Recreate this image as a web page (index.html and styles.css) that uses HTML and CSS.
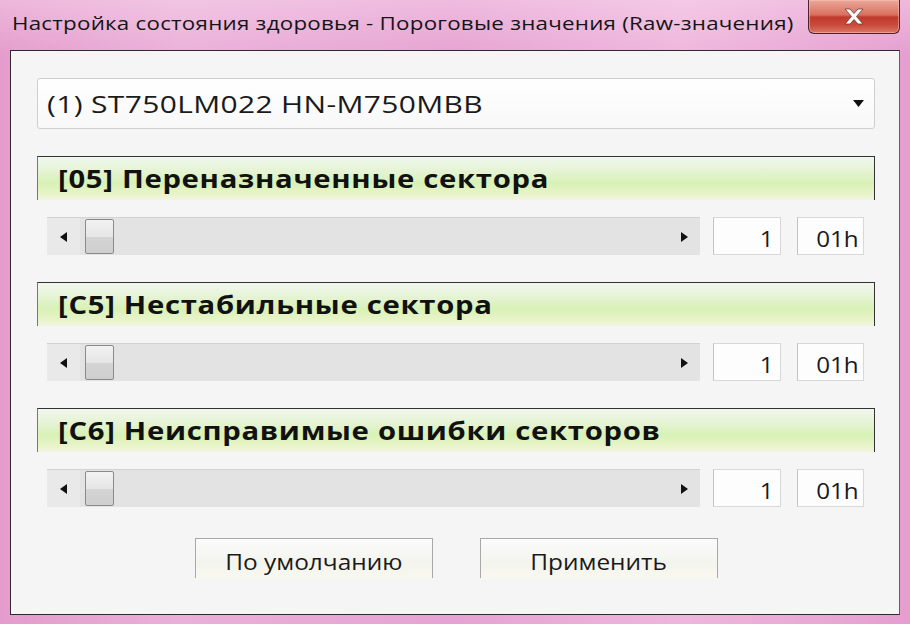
FILE: index.html
```html
<!DOCTYPE html>
<html lang="ru">
<head>
<meta charset="utf-8">
<title>Настройка состояния здоровья</title>
<link rel="stylesheet" href="styles.css">
</head>
<body>
<div class="window">
  <div class="titlebar">
    <div class="title"><span class="wide">Настройка состояния здоровья - Пороговые значения (Raw-значения)</span></div>
    <div class="close">
      <svg width="22" height="17" viewBox="0 0 22 17"><path d="M2 1h5l4 4.5 4-4.5h5l-6.5 7.5 6.5 7.5h-5l-4-4.5-4 4.5h-5l6.5-7.5z" fill="#fff" stroke="#6a3a36" stroke-width="0.8"/></svg>
    </div>
  </div>
  <div class="client">
    <div class="combo">
      <span class="combo-text">(1) ST750LM022 HN-M750MBB</span>
      <svg class="combo-arrow" width="11" height="7" viewBox="0 0 11 7"><path d="M0 0h11l-5.5 7z" fill="#111"/></svg>
    </div>

    <div class="section">
      <div class="header"><span class="htext">[05] Переназначенные сектора</span></div>
      <div class="row">
        <div class="scroll">
          <div class="sbtn"><svg width="8" height="10" viewBox="0 0 8 10"><path d="M7 0v10L0 5z" fill="#111"/></svg></div>
          <div class="thumb"></div>
          <div class="track"></div>
          <div class="sbtn"><svg width="8" height="10" viewBox="0 0 8 10"><path d="M1 0v10l7-5z" fill="#111"/></svg></div>
        </div>
        <div class="val"><span class="num">1</span></div>
        <div class="hex"><span class="num">01h</span></div>
      </div>
    </div>

    <div class="section">
      <div class="header"><span class="htext">[C5] Нестабильные сектора</span></div>
      <div class="row">
        <div class="scroll">
          <div class="sbtn"><svg width="8" height="10" viewBox="0 0 8 10"><path d="M7 0v10L0 5z" fill="#111"/></svg></div>
          <div class="thumb"></div>
          <div class="track"></div>
          <div class="sbtn"><svg width="8" height="10" viewBox="0 0 8 10"><path d="M1 0v10l7-5z" fill="#111"/></svg></div>
        </div>
        <div class="val"><span class="num">1</span></div>
        <div class="hex"><span class="num">01h</span></div>
      </div>
    </div>

    <div class="section">
      <div class="header"><span class="htext">[C6] Неисправимые ошибки секторов</span></div>
      <div class="row">
        <div class="scroll">
          <div class="sbtn"><svg width="8" height="10" viewBox="0 0 8 10"><path d="M7 0v10L0 5z" fill="#111"/></svg></div>
          <div class="thumb"></div>
          <div class="track"></div>
          <div class="sbtn"><svg width="8" height="10" viewBox="0 0 8 10"><path d="M1 0v10l7-5z" fill="#111"/></svg></div>
        </div>
        <div class="val"><span class="num">1</span></div>
        <div class="hex"><span class="num">01h</span></div>
      </div>
    </div>

    <div class="buttons">
      <div class="btn"><span class="btext">По умолчанию</span></div>
      <div class="btn"><span class="btext">Применить</span></div>
    </div>
  </div>
</div>
</body>
</html>
```

FILE: styles.css
```css
* { box-sizing: border-box; }
html, body { margin: 0; padding: 0; }
body {
  width: 910px;
  height: 624px;
  overflow: hidden;
  font-family: "Open Sans", "Noto Sans", sans-serif;
  background: linear-gradient(90deg, #e49ccc 0%, #eab0d8 20%, #e6a2d2 50%, #eeb6dc 75%, #e59ecf 100%);
}
.window {
  width: 910px;
  height: 624px;
  display: flex;
  flex-direction: column;
  background: linear-gradient(180deg, rgba(255,235,248,0.35) 0%, rgba(255,255,255,0) 9%);
}
.titlebar {
  height: 50px;
  display: flex;
  justify-content: space-between;
  align-items: flex-start;
  padding: 0 10px 0 12px;
}
.title {
  margin-top: 10px;
  font-size: 19px;
  color: #151515;
  letter-spacing: 0.2px;
  white-space: nowrap;
}
.wide {
  display: inline-block;
  transform: scaleX(1.176);
  transform-origin: left center;
}
.close {
  width: 92px;
  height: 34px;
  border: 1px solid #4b2226;
  border-top: none;
  border-radius: 0 0 6px 6px;
  background: linear-gradient(180deg, #eaa89a 0%, #d9705f 45%, #c0392c 52%, #c94a3b 75%, #db7866 100%);
  display: flex;
  align-items: center;
  justify-content: center;
  box-shadow: inset 0 0 0 1px rgba(255,200,190,0.5);
}
.client {
  margin: 0 10px 9px 10px;
  flex: 1;
  background: #f5f5f5;
  border: 1px solid #2c2a2e;
  border-right-color: #6a5a66;
  padding: 27px 24px 0 26px;
  display: flex;
  flex-direction: column;
}
.combo {
  height: 51px;
  border: 1px solid #cfcfcf;
  border-radius: 3px;
  background: linear-gradient(180deg, #ffffff 0%, #f8f8f8 100%);
  display: flex;
  align-items: center;
  justify-content: space-between;
  padding: 0 10px 0 9px;
  margin-bottom: 27px;
}
.combo-text {
  display: inline-block;
  font-size: 24px;
  color: #1a1a1a;
  letter-spacing: 0.3px;
  white-space: nowrap;
  transform: scaleX(1.247);
  transform-origin: left center;
}
.section {
  display: flex;
  flex-direction: column;
  margin-bottom: 27px;
}
.header {
  height: 44px;
  border: 1px solid #333;
  border-bottom: none;
  border-left-color: #777;
  background: linear-gradient(180deg, #f2f7ee 0%, #e4f3d2 35%, #d8f1b6 60%, #e8f4c8 85%, #f2f5e0 100%);
  font-weight: bold;
  font-size: 25px;
  color: #111;
  padding: 4px 0 0 20px;
  letter-spacing: 0.6px;
  white-space: nowrap;
}
.htext {
  display: inline-block;
  transform: scaleX(1.17);
  transform-origin: left center;
}
.row {
  margin-top: 17px;
  height: 38px;
  display: flex;
  padding-left: 10px;
}
.scroll {
  width: 653px;
  height: 38px;
  background: #e3e3e3;
  border-top: 1px solid #d2d2d2;
  display: flex;
  align-items: center;
}
.sbtn {
  width: 33px;
  height: 100%;
  display: flex;
  align-items: center;
  justify-content: center;
  background: #e9e9e9;
}
.scroll .sbtn:last-child { background: #e3e3e3; }
.thumb {
  width: 29px;
  height: 35px;
  margin-left: 5px;
  border: 1px solid #8a8a8a;
  border-radius: 2px;
  background: linear-gradient(180deg, #f2f2f2 0%, #e6e6e6 50%, #d4d4d4 51%, #cfcfcf 100%);
}
.track { flex: 1; }
.val, .hex {
  height: 38px;
  background: #fdfdfd;
  border: 1px solid #d8d8d8;
  border-left-color: #c4c4c4;
  font-size: 22px;
  color: #1a1a1a;
  text-align: right;
  line-height: 40px;
}
.num {
  display: inline-block;
  transform: scaleX(1.1);
  transform-origin: right center;
}
.val {
  width: 68px;
  margin-left: 13px;
  padding-right: 6px;
}
.hex {
  width: 67px;
  margin-left: 16px;
  padding-right: 4px;
}
.buttons {
  margin-top: 4px;
  display: flex;
  justify-content: center;
  gap: 47px;
}
.btn {
  width: 238px;
  height: 40px;
  border: 1px solid #a8a8a8;
  border-bottom: none;
  background: linear-gradient(180deg, #fbfbfb 0%, #f4f4ee 60%, #f7f8ee 100%);
  font-size: 22px;
  color: #1a1a1a;
  text-align: center;
  line-height: 44px;
}
.btext {
  display: inline-block;
  transform: scaleX(1.11);
  transform-origin: center center;
}
```
